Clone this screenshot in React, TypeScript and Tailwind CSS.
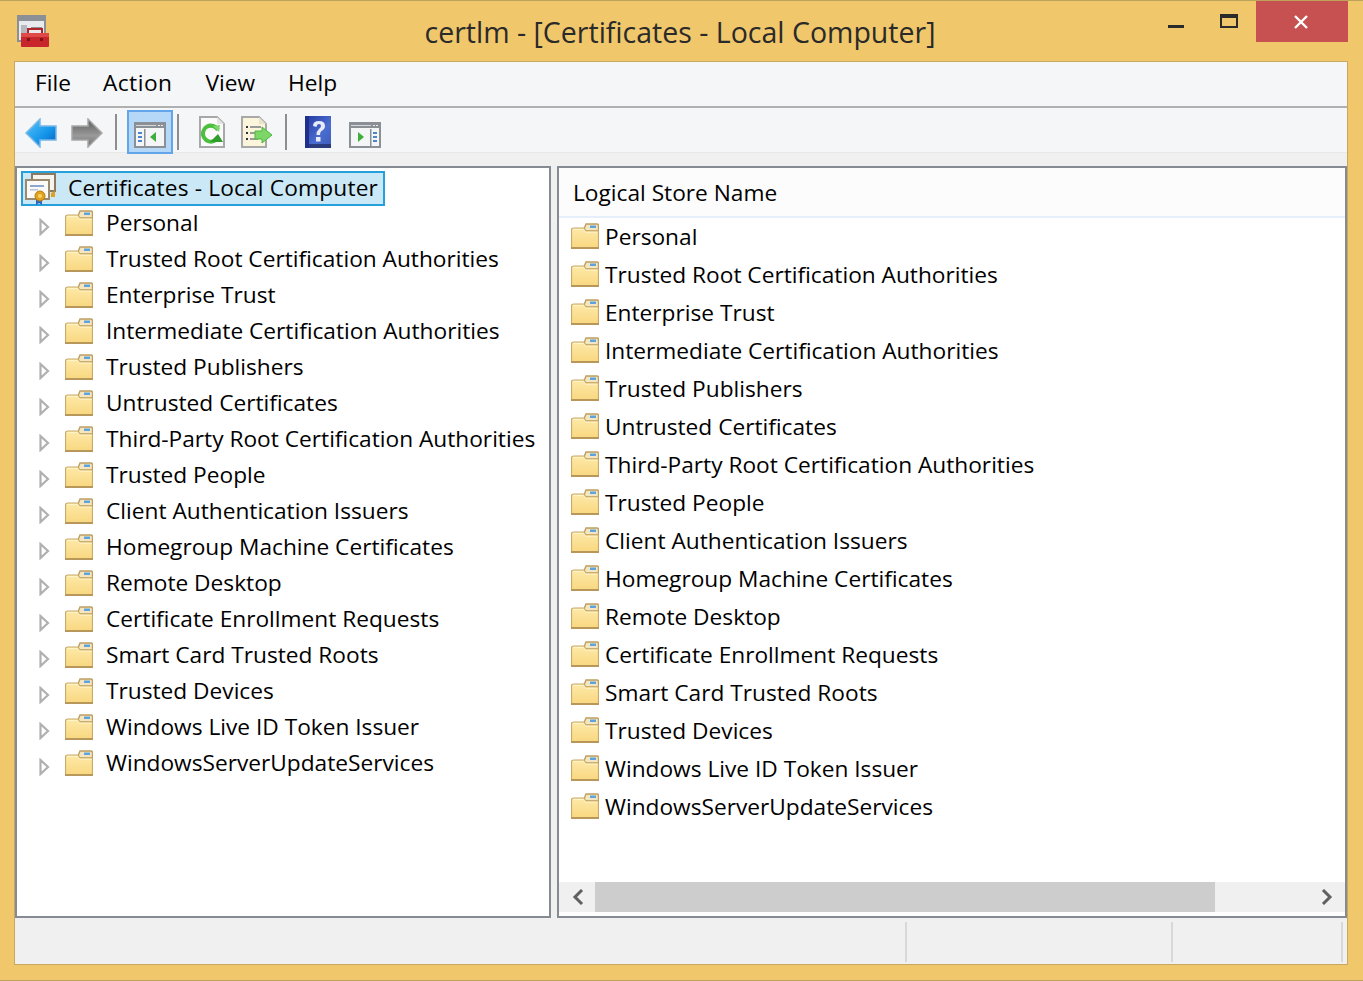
import React from 'react';

const stores = [
  'Personal',
  'Trusted Root Certification Authorities',
  'Enterprise Trust',
  'Intermediate Certification Authorities',
  'Trusted Publishers',
  'Untrusted Certificates',
  'Third-Party Root Certification Authorities',
  'Trusted People',
  'Client Authentication Issuers',
  'Homegroup Machine Certificates',
  'Remote Desktop',
  'Certificate Enrollment Requests',
  'Smart Card Trusted Roots',
  'Trusted Devices',
  'Windows Live ID Token Issuer',
  'WindowsServerUpdateServices',
];

const Folder = () => (
  <svg width="28" height="26" viewBox="0 0 28 26" className="shrink-0">
    <defs>
      <linearGradient id="folderFill" x1="0" y1="0" x2="0" y2="1">
        <stop offset="0" stopColor="#fde9a8" />
        <stop offset="1" stopColor="#f9d77f" />
      </linearGradient>
    </defs>
    <path d="M13 6 L15 1 H26 Q27.5 1 27.5 3 V8 H13 Z" fill="#f3e6c0" stroke="#bd9f60" strokeWidth="1.4" />
    <rect x="19" y="2.5" width="6" height="2.5" fill="#5fa3dc" />
    <path d="M0.5 7 Q0.5 5 3 5 H13 L15 8 H27.5 V25.5 H0.5 Z" fill="url(#folderFill)" stroke="#c9aa68" strokeWidth="1.2" />
    <path d="M2 6.5 H12.5 L14.5 9.2 H26.5" fill="none" stroke="#fff3c8" strokeWidth="1" />
    <rect x="0" y="24" width="28" height="2" fill="#b8975a" />
  </svg>
);

const Expander = () => (
  <svg width="11" height="18" viewBox="0 0 11 18" className="shrink-0">
    <path d="M1.5 2 L9 9 L1.5 16 Z" fill="#fff" stroke="#b0b0b0" strokeWidth="2.2" />
  </svg>
);

const BackArrow = ({ flip, gray }: { flip?: boolean; gray?: boolean }) => (
  <svg width="32" height="30" viewBox="0 0 32 30" className={flip ? 'shrink-0 -scale-x-100' : 'shrink-0'}>
    <defs>
      <linearGradient id="arrowBlue" x1="0" y1="0" x2="1" y2="1">
        <stop offset="0" stopColor="#5cc6f8" />
        <stop offset="0.6" stopColor="#1394ea" />
        <stop offset="1" stopColor="#0a5cb8" />
      </linearGradient>
      <linearGradient id="arrowGray" x1="0" y1="0" x2="0" y2="1">
        <stop offset="0" stopColor="#5c5c5c" />
        <stop offset="0.6" stopColor="#9a9a9a" />
        <stop offset="1" stopColor="#6d6d6d" />
      </linearGradient>
    </defs>
    <path
      d="M15 1 L1 15 L15 29 L15 22 L31 22 L31 8 L15 8 Z"
      fill={gray ? 'url(#arrowGray)' : 'url(#arrowBlue)'}
      stroke={gray ? '#a8a8a8' : '#7ab8e8'}
      strokeWidth="1.5"
    />
  </svg>
);

const PaneIcon = ({ right }: { right?: boolean }) => (
  <svg width="32" height="26" viewBox="0 0 32 26" className="shrink-0">
    <rect x="1" y="1" width="30" height="24" fill="#f4f5f6" stroke="#8b8f96" strokeWidth="2" />
    <rect x="1" y="1" width="30" height="5" fill="#8b8f96" />
    <rect x="2" y="3" width="20" height="1" fill="#d6d8dc" />
    <rect x="24" y="3" width="2" height="1" fill="#eee" />
    <rect x="27" y="3" width="2" height="1" fill="#eee" />
    {right ? (
      <>
        <rect x="21" y="7" width="1.5" height="17" fill="#8b8f96" />
        <rect x="24" y="10" width="4" height="2" fill="#4a86c8" />
        <rect x="24" y="14" width="4" height="2" fill="#4a86c8" />
        <rect x="24" y="18" width="4" height="2" fill="#4a86c8" />
        <path d="M9 10 L15 15 L9 20 Z" fill="#3fae3a" />
      </>
    ) : (
      <>
        <rect x="10" y="7" width="1.5" height="17" fill="#8b8f96" />
        <rect x="4" y="10" width="4" height="2" fill="#4a86c8" />
        <rect x="4" y="14" width="4" height="2" fill="#4a86c8" />
        <rect x="4" y="18" width="4" height="2" fill="#4a86c8" />
        <path d="M22 10 L16 15 L22 20 Z" fill="#3fae3a" />
      </>
    )}
  </svg>
);

const RefreshIcon = () => (
  <svg width="26" height="32" viewBox="0 0 26 32" className="shrink-0">
    <path d="M1 1 H18 L25 8 V31 H1 Z" fill="#fbfbfb" stroke="#a8a8a8" strokeWidth="2" />
    <path d="M18 1 V8 H25 Z" fill="#e4e4e4" />
    <path d="M19 14 A8 8 0 1 0 16 24.5" fill="none" stroke="#4bbf3e" strokeWidth="4" />
    <path d="M11 26 H24 L19 18 Z" fill="#2f9e2a" />
    <path d="M14 10 L21 9 L20 16 Z" fill="#7fd66f" />
  </svg>
);

const ExportIcon = () => (
  <svg width="32" height="32" viewBox="0 0 32 32" className="shrink-0">
    <path d="M1 1 H18 L25 8 V31 H1 Z" fill="#fbf5dc" stroke="#a8a8a8" strokeWidth="2" />
    <path d="M18 1 V8 H25 Z" fill="#e9e3cd" />
    <rect x="5" y="10" width="2" height="2" fill="#333" />
    <rect x="9" y="10" width="11" height="2" fill="#9a9a9a" />
    <rect x="5" y="16" width="2" height="2" fill="#333" />
    <rect x="9" y="16" width="8" height="2" fill="#9a9a9a" />
    <rect x="5" y="22" width="2" height="2" fill="#333" />
    <rect x="9" y="22" width="8" height="2" fill="#9a9a9a" />
    <path d="M14 15 H21 V11 L31 19 L21 27 V23 H14 Z" fill="#7cd668" stroke="#4cb83e" strokeWidth="1" />
  </svg>
);

const HelpIcon = () => (
  <svg width="26" height="32" viewBox="0 0 26 32" className="shrink-0">
    <defs>
      <linearGradient id="helpFill" x1="0" y1="0" x2="1" y2="1">
        <stop offset="0" stopColor="#2338a0" />
        <stop offset="0.6" stopColor="#4a6dd0" />
        <stop offset="1" stopColor="#3d5bb8" />
      </linearGradient>
    </defs>
    <rect width="26" height="32" fill="url(#helpFill)" />
    <rect y="28" width="26" height="4" fill="#2b3c7c" />
    <rect width="4" height="32" fill="#1f2f8c" />
    <path d="M8 10 Q8 5 14 5 Q20 5 20 10 Q20 13 16.5 15 Q15 16 15 19 H11.5 Q11.5 15 14 13 Q16 11.5 16 10 Q16 8 14 8 Q12 8 11.5 11 Z" fill="#e8ecf8" />
    <rect x="11" y="21" width="4.5" height="4.5" fill="#e8ecf8" />
  </svg>
);

const AppIcon = () => (
  <svg width="32" height="32" viewBox="0 0 32 32" className="shrink-0">
    <rect x="1" y="1" width="27" height="25" fill="#e8eaee" stroke="#8b8f96" strokeWidth="2" />
    <rect x="1" y="1" width="27" height="5" fill="#8b8f96" />
    <rect x="4" y="10" width="6" height="10" fill="#b4b8c0" />
    <path d="M14 13 H25" stroke="#8b8f96" strokeWidth="2" />
    <rect x="4" y="18" width="28" height="14" rx="1" fill="#c8262c" />
    <rect x="4" y="18" width="28" height="4" fill="#dd4a48" />
    <path d="M11 18 V14 H25 V18" fill="none" stroke="#b0242a" strokeWidth="2" />
    <rect x="10" y="23" width="3" height="3" fill="#7a1416" />
    <rect x="23" y="23" width="3" height="3" fill="#7a1416" />
  </svg>
);

const CertIcon = () => (
  <svg width="32" height="32" viewBox="0 0 32 32" className="shrink-0">
    <rect x="7" y="1" width="23" height="17" fill="#f6f4ee" stroke="#8c7a60" strokeWidth="2" />
    <path d="M26 20 L30 18 V24 H26 Z" fill="#e0a020" />
    <rect x="1" y="7" width="23" height="19" fill="#fbfaf6" stroke="#9a8a70" strokeWidth="2" />
    <rect x="5" y="12" width="14" height="2" fill="#8aa8d0" />
    <rect x="5" y="16" width="8" height="1.5" fill="#b8c4d4" />
    <path d="M11 26 V32 L14 30 L17 32 V26 Z" fill="#2a66c8" />
    <circle cx="15" cy="23" r="5" fill="#e3a21e" stroke="#b87c10" />
    <circle cx="15" cy="23" r="2" fill="#f6d268" />
  </svg>
);

const Sep = () => <div className="mt-1 h-9 w-[2px] shrink-0 bg-[#8e8e8e]" />;

export default function App() {
  return (
    <div className="flex h-[981px] w-[1363px] flex-col overflow-hidden border-y border-y-[#bda25c] bg-[#f0c76a] font-['Open_Sans','Noto_Sans',sans-serif] text-black">
      {/* Title bar */}
      <div className="flex h-[60px] shrink-0">
        <div className="ml-[17px] mt-[14px]">
          <AppIcon />
        </div>
        <div className="ml-[-49px] flex-1 pl-[222px] pr-[30px] pt-[11px] text-center text-[28.5px] leading-[40px] text-[#2a2a2a]">
          certlm - [Certificates - Local Computer]
        </div>
        <div className="flex items-start">
          <div className="mt-[24px] h-[3px] w-4 bg-[#2b2b2b]" />
          <div className="ml-[36px] mt-[13px] h-[14px] w-[18px] border-2 border-t-4 border-[#2b2b2b]" />
          <div className="ml-[18px] flex h-[41px] w-[92px] items-center justify-center bg-[#c75050]">
            <svg width="16" height="14" viewBox="0 0 16 14" className="-ml-[2px]">
              <path d="M2 1 L14 13 M14 1 L2 13" stroke="#fff" strokeWidth="2.4" />
            </svg>
          </div>
          <div className="w-[15px]" />
        </div>
      </div>

      {/* Client area */}
      <div className="mx-[14px] mb-[15px] flex min-h-0 w-[1334px] flex-1 flex-col border border-[#c8a85e] bg-[#f0f0f0]">
        {/* Menu */}
        <div className="flex h-[46px] shrink-0 items-center border-b-2 border-b-[#b0b0b0] bg-[#f5f6f7] pb-[2px] pl-5 text-[22.7px]">
          <span>File</span>
          <span className="ml-[32px] tracking-[0.5px]">Action</span>
          <span className="ml-[33px]">View</span>
          <span className="ml-[33px]">Help</span>
        </div>

        {/* Toolbar */}
        <div className="flex h-11 shrink-0 items-center bg-[#f5f6f7] pl-[10px]">
          <div className="pt-[6px]">
            <BackArrow />
          </div>
          <div className="ml-[14px] pt-[6px]">
            <BackArrow flip gray />
          </div>
          <div className="ml-[12px]">
            <Sep />
          </div>
          <div className="relative z-10 ml-[10px] mt-1 flex h-11 w-[46px] shrink-0 items-center justify-center border-2 border-[#62a5e8] bg-[#b5d7f8] pt-[6px]">
            <PaneIcon />
          </div>
          <div className="ml-[4px]">
            <Sep />
          </div>
          <div className="ml-[20px] pt-1">
            <RefreshIcon />
          </div>
          <div className="ml-[16px] pt-1">
            <ExportIcon />
          </div>
          <div className="ml-[12px]">
            <Sep />
          </div>
          <div className="ml-[18px] pt-1">
            <HelpIcon />
          </div>
          <div className="ml-[18px] pt-[10px]">
            <PaneIcon right />
          </div>
        </div>
        <div className="h-[14px] shrink-0 border-t border-t-[#e8e8e8] bg-[#f0f0f0]" />

        {/* Panes */}
        <div className="flex h-[752px] shrink-0 gap-[6px]">
          <div className="flex w-[536px] shrink-0 flex-col border-2 border-[#868a93] bg-white pl-[4px] pt-[3px]">
            <div className="flex h-[35px] w-[364px] items-center border-2 border-[#26a0da] bg-[#cbe8f6] pl-[2px] text-[22.7px] leading-none">
              <CertIcon />
              <span className="ml-[11px] whitespace-nowrap tracking-[0.17px]">Certificates - Local Computer</span>
            </div>
            {stores.map((name) => (
              <div key={name} className="flex h-9 items-center whitespace-nowrap text-[22.7px]">
                <div className="ml-[18px] mt-[6px]">
                  <Expander />
                </div>
                <div className="-mt-[2px] ml-[15px]">
                  <Folder />
                </div>
                <span className="-mt-[2px] ml-[13px]">{name}</span>
              </div>
            ))}
          </div>

          <div className="flex min-w-0 flex-1 flex-col border-2 border-[#868a93] bg-white">
            <div className="flex h-[50px] shrink-0 items-center border-b-2 border-b-[#e5f0fa] bg-[#fcfcfc] pl-[14px] pt-[2px] text-[22.7px]">
              Logical Store Name
            </div>
            <div className="flex min-h-0 flex-1 flex-col pt-[1px]">
              {stores.map((name) => (
                <div key={name} className="flex h-[38px] shrink-0 items-center whitespace-nowrap pl-[12px] text-[22.7px]">
                  <div className="-mt-1">
                    <Folder />
                  </div>
                  <span className="-mt-[2px] ml-[6px]">{name}</span>
                </div>
              ))}
            </div>
            {/* Horizontal scrollbar */}
            <div className="mb-[4px] flex h-[30px] shrink-0 items-center bg-[#f0f0f0] px-[1px]">
              <div className="flex w-[35px] shrink-0 justify-center">
                <svg width="12" height="16" viewBox="0 0 12 16">
                  <path d="M10 1 L3 8 L10 15" fill="none" stroke="#606060" strokeWidth="3" />
                </svg>
              </div>
              <div className="h-full w-[620px] shrink-0 bg-[#cdcdcd]" />
              <div className="flex flex-1 justify-end pr-[11px]">
                <svg width="12" height="16" viewBox="0 0 12 16">
                  <path d="M2 1 L9 8 L2 15" fill="none" stroke="#606060" strokeWidth="3" />
                </svg>
              </div>
            </div>
          </div>
        </div>

        {/* Status bar */}
        <div className="flex min-h-0 flex-1 items-stretch bg-[#f0f0f0] pb-[2px] pt-[4px]">
          <div className="w-[892px] shrink-0 border-r-2 border-r-[#d8d8d8]" />
          <div className="w-[266px] shrink-0 border-r-2 border-r-[#d8d8d8]" />
          <div className="w-[170px] shrink-0 border-r-2 border-r-[#d8d8d8]" />
        </div>
      </div>
    </div>
  );
}
